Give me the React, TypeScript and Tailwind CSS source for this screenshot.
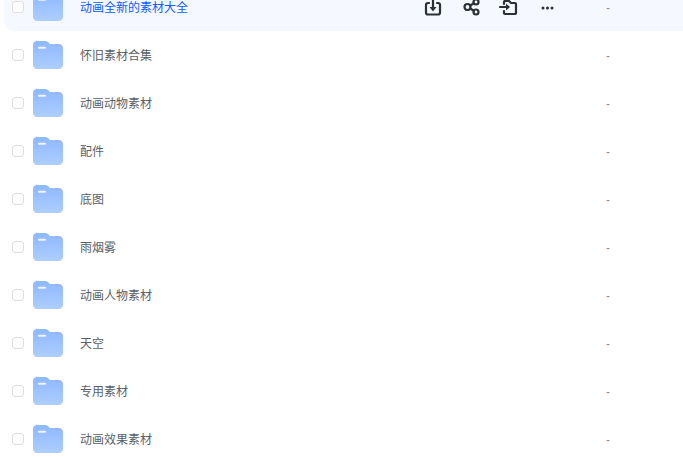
const names = ["动画全新的素材大全", "怀旧素材合集", "动画动物素材", "配件", "底图", "雨烟雾", "动画人物素材", "天空", "专用素材", "动画效果素材"];

function Folder() {
  return (
    <svg width="30" height="28" viewBox="0 0 30 28" className="shrink-0">
      <defs>
        <linearGradient id="fg" x1="0" y1="0" x2="0" y2="1">
          <stop offset="0" stopColor="#8db8ff" />
          <stop offset="1" stopColor="#aeceff" />
        </linearGradient>
      </defs>
      <path d="M4 0h8.500c1 0 1.800.4 2.400 1.100L17 3h9c2.200 0 4 1.800 4 4v17c0 2.200-1.800 4-4 4H4c-2.200 0-4-1.800-4-4V4c0-2.200 1.800-4 4-4z" fill="url(#fg)" />
      <rect x="5" y="5.700" width="8" height="2" rx="1" fill="#eef5ff" />
    </svg>
  );
}

function Actions() {
  const p = { fill: "none", stroke: "#2b2f36", strokeWidth: 2.200, strokeLinecap: "round" as const, strokeLinejoin: "round" as const };
  return (
    <div className="flex w-[183px] shrink-0 items-center">
      <svg width="20" height="20" viewBox="0 0 20 20" className="shrink-0">
        <path {...p} d="M6 6H5a2 2 0 0 0-2 2v7.500a2 2 0 0 0 2 2h10a2 2 0 0 0 2-2V8a2 2 0 0 0-2-2h-1" />
        <path {...p} d="M10 2v9" />
        <path d="M6.500 10h7L10 14.500z" fill="#2b2f36" />
      </svg>
      <svg width="20" height="20" viewBox="0 0 20 20" className="ml-[18px] shrink-0">
        <circle {...p} cx="6.500" cy="10" r="3" />
        <circle {...p} cx="15" cy="5" r="2.500" />
        <circle {...p} cx="15" cy="15" r="2.500" />
        <path {...p} d="M9.200 8.500l3.600-2.200M9.200 11.500l3.600 2.200" />
      </svg>
      <svg width="20" height="20" viewBox="0 0 20 20" className="ml-[17px] shrink-0">
        <path {...p} d="M6 7V5a1 1 0 0 1 1-1h4l2 2h4a1 1 0 0 1 1 1v8.500a1.500 1.500 0 0 1-1.500 1.500H7a1 1 0 0 1-1-1v-2" />
        <path {...p} d="M2 10h6" />
        <path d="M8 6.500v7l4-3.500z" fill="#2b2f36" />
      </svg>
      <svg width="14" height="4" viewBox="0 0 14 4" className="ml-[23px] mt-[2px] shrink-0">
        <circle cx="2" cy="2" r="1.500" fill="#2b2f36" />
        <circle cx="6.500" cy="2" r="1.500" fill="#2b2f36" />
        <circle cx="11" cy="2" r="1.500" fill="#2b2f36" />
      </svg>
    </div>
  );
}

export default function App() {
  return (
    <div className="h-[460px] w-[683px] overflow-hidden bg-white font-['Liberation_Sans','Noto_Sans_CJK_SC',sans-serif]">
      <div className="-mt-[17px] ml-1 flex w-[700px] flex-col">
        {names.map((name, i) => (
          <div key={name} className={`flex h-12 items-center rounded-[10px] pl-2 ${i === 0 ? "bg-[#f5f8ff]" : ""}`}>
            <div className="h-3 w-3 shrink-0 rounded-[3px] border border-[#dedede] bg-white" />
            <div className="ml-[9px] flex"><Folder /></div>
            <div className={`ml-[17px] w-[343px] shrink-0 pt-0.5 text-xs ${i === 0 ? "text-[#0d5cff]" : "text-[#5a5f67]"}`}>{name}</div>
            {i === 0 ? <Actions /> : <div className="w-[183px] shrink-0" />}
            <div className="pt-0.5 text-xs text-[#8a8f96]">-</div>
          </div>
        ))}
      </div>
    </div>
  );
}
